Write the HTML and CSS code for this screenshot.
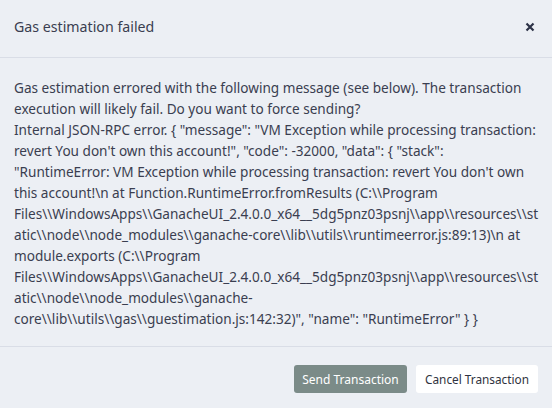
FILE: index.html
```html
<!DOCTYPE html>
<html>
<head>
<meta charset="utf-8">
<link rel="stylesheet" href="styles.css">
</head>
<body>
<div class="modal">
  <div class="modal-header">
    <h2 class="modal-title">Gas estimation failed</h2>
    <button class="close" aria-label="Close">
      <svg width="10" height="10" viewBox="0 0 10 10"><path d="M1.5 1.5 L8.5 8.5 M8.5 1.5 L1.5 8.5" stroke="#2d3247" stroke-width="2.2" stroke-linecap="butt"/></svg>
    </button>
  </div>
  <div class="modal-body">
    <p class="msg">Gas estimation errored with the following message (see below). The transaction<br>execution will likely fail. Do you want to force sending?</p>
    <p class="msg">Internal JSON-RPC error. { "message": "VM Exception while processing transaction:<br>revert You don't own this account!", "code": -32000, "data": { "stack":<br>"RuntimeError: VM Exception while processing transaction: revert You don't own<br>this account!\n at Function.RuntimeError.fromResults (C:\\Program<br>Files\\WindowsApps\\GanacheUI_2.4.0.0_x64__5dg5pnz03psnj\\app\\resources\\st<br>atic\\node\\node_modules\\ganache-core\\lib\\utils\\runtimeerror.js:89:13)\n at<br>module.exports (C:\\Program<br>Files\\WindowsApps\\GanacheUI_2.4.0.0_x64__5dg5pnz03psnj\\app\\resources\\st<br>atic\\node\\node_modules\\ganache-<br>core\\lib\\utils\\gas\\guestimation.js:142:32)", "name": "RuntimeError" } }</p>
  </div>
  <div class="modal-footer">
    <button class="btn btn-primary">Send Transaction</button>
    <button class="btn btn-secondary">Cancel Transaction</button>
  </div>
</div>
</body>
</html>
```

FILE: styles.css
```css
* { box-sizing: border-box; }
html, body {
  margin: 0;
  padding: 0;
  background: #eceff4;
}
body {
  font-family: "Noto Sans", "Open Sans", sans-serif;
  color: #3a3e50;
  width: 552px;
  height: 408px;
  overflow: hidden;
}
.modal {
  display: flex;
  flex-direction: column;
  height: 408px;
}
.modal-header {
  display: flex;
  align-items: center;
  justify-content: space-between;
  height: 58px;
  padding: 0 14px 4px 14px;
  border-bottom: 1px solid #d9dde6;
}
.modal-title {
  margin: 0;
  font-size: 14.2px;
  font-weight: 400;
  color: #3a3e50;
}
.close {
  background: none;
  border: 0;
  padding: 0;
  width: 14px;
  height: 14px;
  display: flex;
  align-items: center;
  justify-content: center;
  margin-right: 1px;
}
.modal-body {
  padding: 19px 14px 16px 14px;
  flex: 1;
}
.msg {
  margin: 0;
  font-size: 13.6px;
  line-height: 21px;
  white-space: nowrap;
}
.modal-footer {
  display: flex;
  justify-content: flex-end;
  gap: 9px;
  padding: 18px 14px 15px 14px;
  border-top: 1px solid #d9dde6;
}
.btn {
  font-family: "Noto Sans", "Open Sans", sans-serif;
  font-size: 12px;
  height: 28px;
  border: 0;
  border-radius: 3px;
  padding: 0;
  white-space: nowrap;
}
.btn-primary {
  background: #7b8b88;
  color: #ffffff;
  width: 113px;
}
.btn-secondary {
  background: #ffffff;
  color: #2f3340;
  width: 122px;
  font-size: 11.8px;
}
```
